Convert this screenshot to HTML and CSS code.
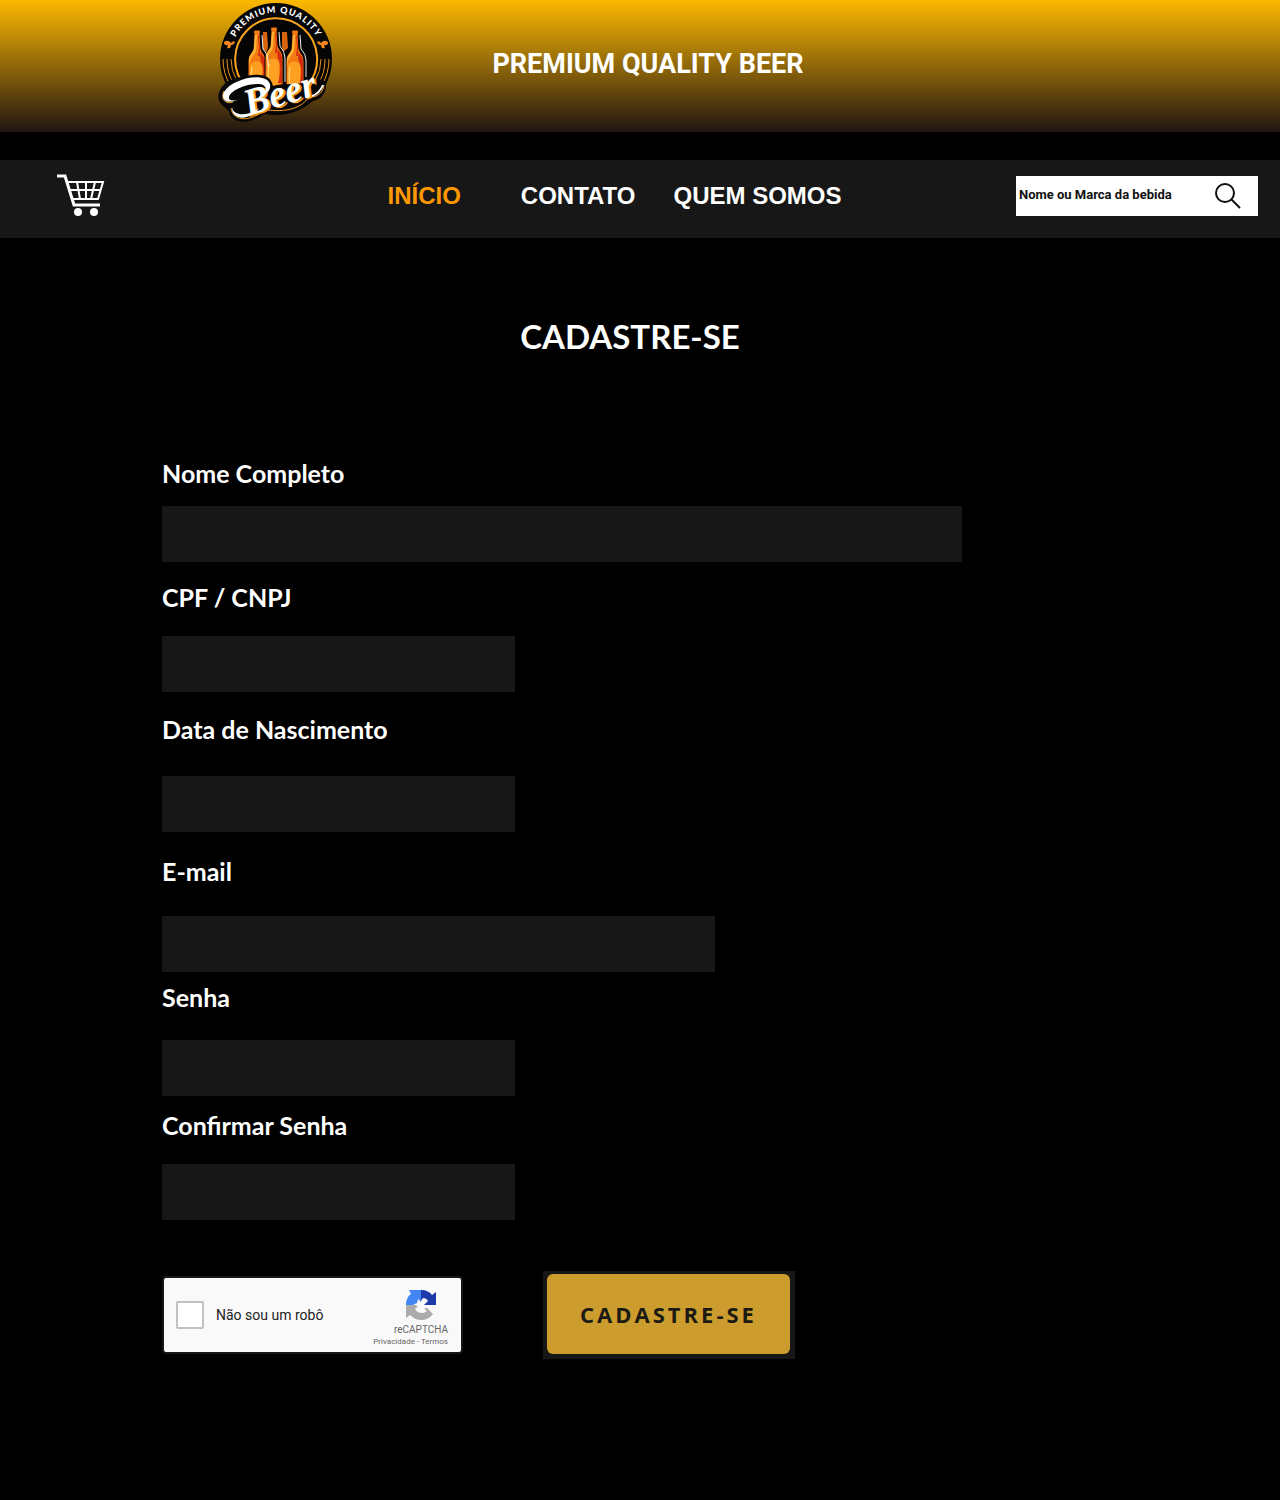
FILE: index.html
```html
<!DOCTYPE html>
<html lang="pt-BR">
<head>
<meta charset="utf-8">
<meta name="viewport" content="width=device-width, initial-scale=1">
<title>Premium Quality Beer - Cadastre-se</title>
<link rel="stylesheet" href="styles.css">
</head>
<body>
<header class="banner">
  <a class="banner-logo" href="#" aria-label="Premium Quality Beer">
    <svg class="logo" width="120" height="124" viewBox="0 0 120 124">
      <defs>
        <path id="arc" d="M18 40 A46 46 0 0 1 102 40"/>
        <g id="bottle">
          <path d="M-3 0h6q1 2 0 4l1 15c1 4 5 6 5 12v38H-9V31c0-6 4-8 5-12l1-15q-1-2 0-4z" fill="#f47a12" stroke="#000" stroke-width="1"/>
          <path d="M-2 5h2l-1 15c-1 5-5 6-6 12v5l-1-7c0-5 4-7 5-11z" fill="#ffb638"/>
          <path d="M-7 35c4-5 10-4 12 0v24H-8z" fill="#ffa022"/>
          <path d="M4 32c3 5 3 14 0 24h4V31c0-4-3-6-4-9-1 4-1 7 0 10zM1 6l1 12-1 8h2l0-8-1-12z" fill="#d52d10"/>
          <path d="M-5 37q-2 9 0 19" fill="none" stroke="#ffe07c" stroke-width="1"/>
        </g>
      </defs>
      <circle cx="60" cy="59" r="56" fill="#050505"/>
      <path d="M30 87A41 41 0 1 1 92 85" fill="none" stroke="#f9a51f" stroke-width="2"/>
      <g fill="none" stroke="#e6921a" stroke-width="1">
        <path d="M7 59q0 14 7 26M11 59q0 14 6 23M15 59q0 12 6 22M113 59q0 14-7 26M109 59q0 14-6 23M105 59q0 12-6 22"/>
      </g>
      <g fill="#f2851d">
        <path d="M8 42q4-3 7 1 2-3 4-1-1 3-4 3 0 4-4 3l1-3q-4 1-4-3zM112 42q-4-3-7 1-2-3-4-1 1 3 4 3 0 4 4 3l-1-3q4 1 4-3z"/>
        <path d="M47 32h4l1 14-1 7-4-4zM66 32h5l1 16-5 4-1-6z" fill="#d8650e"/>
      </g>
      <use href="#bottle" x="41" y="30"/>
      <use href="#bottle" x="79" y="30"/>
      <use href="#bottle" x="58" y="27"/>
      <path d="M46 35l1 14q5 5 5 11v6M63 32l1 14q5 6 5 12v24M84 35l1 14q5 5 5 11v17" fill="none" stroke="#eee" stroke-width="1"/>
      <text class="logo-ring"><textPath href="#arc" startOffset="50%" text-anchor="middle">PREMIUM QUALITY</textPath></text>
      <path d="M25 77C3 80-2 98 6 105c4 4 7 4 8 10 7 11 24 7 34-1 18 2 34-2 43-13 12 2 20-7 19-18-5-7-16-3-22 0-12 2-20 0-31 3-3-14-18-12-32-9z" fill="#070707"/>
      <path d="M8 91c-4 8 2 14 9 11M15 108c2 15 22 13 33 2M52 110c23 3 37-5 41-14M95 97c8 0 13-7 13-12" fill="none" stroke="#f49a1e" stroke-width="1"/>
      <text class="logo-word logo-word-shade" transform="translate(34 117) rotate(-17)">Beer</text>
      <text class="logo-word" transform="translate(32 116) rotate(-17)">Beer</text>
      <path d="M25 98C12 106 4 100 8 92 16 78 50 71 54 84c1 5-2 9-7 11 4-5 4-11-5-11-12 0-27 6-29 13-1 4 6 5 12 1zM16 107c1 9 16 10 27 1-8 13-28 13-27-1z" fill="#fff"/>
      <path d="M96 96c6-2 9-6 11-11" fill="none" stroke="#fff" stroke-width="2"/>
    </svg>
  </a>
  <p class="banner-title">PREMIUM QUALITY BEER</p>
</header>

<nav class="navbar" aria-label="Principal">
  <a class="cart" href="#" aria-label="Carrinho">
    <svg width="48" height="42" viewBox="0 0 48 42" fill="none" stroke="#fff">
      <path d="M0 2h8l9 29h26" stroke-width="3"/>
      <path d="M10 8h36l-5 17H15M12 16h31M20 8l3 17M29 8v17M38 8l-4 17" stroke-width="2"/>
      <g fill="#fff" stroke="none"><circle cx="21" cy="38" r="4"/><circle cx="37" cy="38" r="4"/></g>
    </svg>
  </a>
  <div class="links">
    <a class="link link-active" href="#">INÍCIO</a>
    <a class="link" href="#">CONTATO</a>
    <a class="link" href="#">QUEM SOMOS</a>
  </div>
  <form class="search" role="search">
    <input class="search-input" type="search" placeholder="Nome ou Marca da bebida" aria-label="Nome ou Marca da bebida">
    <button class="search-button" type="button" aria-label="Buscar">
      <svg width="26" height="26" viewBox="0 0 26 26" fill="none" stroke="#111" stroke-width="2"><circle cx="10" cy="10" r="9"/><path d="M16 16l9 9"/></svg>
    </button>
  </form>
</nav>

<main class="page">
  <h1 class="heading">CADASTRE-SE</h1>
  <form class="signup">
    <div class="field field-name"><label class="label" for="nome">Nome Completo</label><input class="input" id="nome" type="text"></div>
    <div class="field field-document"><label class="label" for="doc">CPF / CNPJ</label><input class="input" id="doc" type="text"></div>
    <div class="field field-birth"><label class="label" for="nasc">Data de Nascimento</label><input class="input" id="nasc" type="text"></div>
    <div class="field field-email"><label class="label" for="email">E-mail</label><input class="input" id="email" type="email"></div>
    <div class="field field-password"><label class="label" for="senha">Senha</label><input class="input" id="senha" type="password"></div>
    <div class="field field-confirm"><label class="label" for="conf">Confirmar Senha</label><input class="input" id="conf" type="password"></div>
    <div class="actions">
      <div class="captcha">
        <input class="captcha-box" id="robo" type="checkbox">
        <label class="captcha-label" for="robo">Não sou um robô</label>
        <div class="captcha-brand">
          <svg class="captcha-logo" width="32" height="32" viewBox="0 0 32 32">
            <path d="M16 1c5 0 9 2 11 5l4-3v13H19l4-4c-1-2-3-3-5-3l-2 3z" fill="#1c3aa9"/>
            <path d="M16 1v12l-3-3-1 4-4 2H1c0-5 2-9 5-11L4 1z" fill="#4285f4"/>
            <path d="M1 16h9l3 1-3 3c2 3 4 4 7 4 2 0 4-1 5-2l-3-3h3l6 6c-3 4-7 6-12 6-4 0-8-2-11-5l-4 3z" fill="#ababab"/>
          </svg>
          <span class="captcha-name">reCAPTCHA</span>
          <span class="captcha-terms"><a href="#">Privacidade</a> - <a href="#">Termos</a></span>
        </div>
      </div>
      <div class="submit-frame"><button class="submit" type="button">CADASTRE-SE</button></div>
    </div>
  </form>
</main>
</body>
</html>
```
FILE: styles.css
```css
* { box-sizing: border-box; }

body {
  margin: 0;
  min-height: 100vh;
  background: #000;
  color: #fff;
  font-family: Lato, "Open Sans", sans-serif;
}

a { color: inherit; text-decoration: none; }
svg { display: block; }

.banner {
  display: grid;
  grid-template-columns: 1fr auto 1fr;
  align-items: center;
  height: 132px;
  padding-left: 16px;
  background: linear-gradient(#fdb900, #211512);
}
.banner-logo { justify-self: center; align-self: start; margin-left: 44px; }
.banner-title { margin: 0; font: 700 27px/32px Roboto, sans-serif; padding-bottom: 4px; }

.logo { overflow: visible; }
.logo-ring { font: 900 9px Lato, sans-serif; fill: #fff; letter-spacing: 1px; }
.logo-word { font: italic 700 38px "Liberation Serif", serif; fill: #fff; }
.logo-word-shade { fill: #f49a1e; }

.navbar {
  display: grid;
  grid-template-columns: 1fr auto 1fr;
  align-items: center;
  height: 78px;
  margin-top: 28px;
  padding: 0 22px 6px 57px;
  background: #171717;
}
.cart { padding-bottom: 2px; }
.links { display: flex; gap: 38px; margin-right: 86px; }
.link { font: 700 24px/32px "Liberation Sans", sans-serif; }
.link-active { margin-right: 22px; color: #ff9800; }

.search {
  display: flex;
  align-items: center;
  justify-self: end;
  width: 242px;
  height: 40px;
  background: #fff;
}
.search-input {
  flex: 1;
  min-width: 0;
  padding: 0 3px 2px;
  border: 0;
  background: none;
  color: #111;
  font: 700 13px/16px Roboto, sans-serif;
}
.search-input::placeholder { color: #111; opacity: 1; }
.search-button { padding: 0 17px; border: 0; background: none; }

.page { padding: 76px 162px 140px; }
.heading {
  margin: 0;
  padding-right: 20px;
  text-align: center;
  font-size: 33px;
  line-height: 44px;
}

.signup { margin-top: 100px; }
.field { display: flex; flex-direction: column; gap: 24px; max-width: 353px; }
.label { font-size: 25px; font-weight: 700; line-height: 30px; }
.input {
  width: 100%;
  height: 56px;
  padding: 0 16px;
  border: 0;
  background: #171717;
  color: #fff;
  font: 400 20px/24px Lato, sans-serif;
}
.field-name { gap: 18px; max-width: 800px; }
.field-document { margin-top: 20px; }
.field-birth { gap: 32px; margin-top: 22px; }
.field-email { gap: 30px; max-width: 553px; margin-top: 24px; }
.field-password { gap: 28px; margin-top: 10px; }
.field-confirm { margin-top: 14px; }

.actions { display: flex; flex-wrap: wrap; align-items: center; gap: 80px; margin-top: 51px; }

.captcha {
  display: flex;
  align-items: center;
  width: 301px;
  height: 78px;
  padding: 0 13px 0 12px;
  border: 2px solid #171717;
  border-radius: 4px;
  background: #f9f9f9;
  color: #222;
  font-family: Roboto, sans-serif;
}
.captcha-box {
  appearance: none;
  width: 28px;
  height: 28px;
  margin: 0 12px 0 0;
  border: 2px solid #c1c1c1;
  border-radius: 2px;
  background: #fff;
}
.captcha-label { font-size: 14px; line-height: 20px; }
.captcha-brand {
  display: flex;
  flex-direction: column;
  align-items: flex-end;
  margin-left: auto;
  padding-top: 6px;
  color: #666;
}
.captcha-logo { margin: 0 11px 2px 0; }
.captcha-name { font-size: 10px; line-height: 14px; }
.captcha-terms { font-size: 8px; line-height: 10px; }

.submit-frame { padding: 3px 5px 5px 4px; background: #171717; }
.submit {
  display: block;
  width: 243px;
  height: 80px;
  padding: 0;
  border: 0;
  border-radius: 6px;
  background: #cc9d2e;
  color: #1c1a14;
  font: 700 22px/32px "Open Sans", sans-serif;
  letter-spacing: 3px;
}
```
